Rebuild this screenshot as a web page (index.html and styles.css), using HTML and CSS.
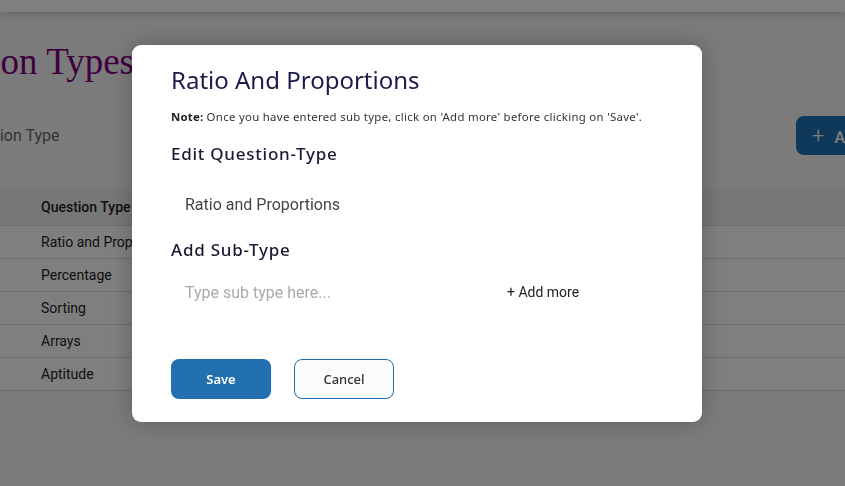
FILE: index.html
```html
<!DOCTYPE html>
<html>
<head>
<meta charset="utf-8">
<link rel="stylesheet" href="styles.css">
</head>
<body>
<div class="navbar"></div>
<main class="page">
  <h1 class="page-title">Question Types</h1>
  <div class="toolbar">
    <input class="search" type="text" placeholder="Search Question Type">
    <button class="add-btn"><span class="plus">+</span> Add Question Type</button>
  </div>
  <table class="grid">
    <thead>
      <tr><th class="c1">S.No</th><th class="c2">Question Type</th><th>Sub Types</th></tr>
    </thead>
    <tbody>
      <tr><td class="c1">1</td><td>Ratio and Proportions</td><td></td></tr>
      <tr><td class="c1">2</td><td>Percentage</td><td></td></tr>
      <tr><td class="c1">3</td><td>Sorting</td><td></td></tr>
      <tr><td class="c1">4</td><td>Arrays</td><td></td></tr>
      <tr><td class="c1">5</td><td>Aptitude</td><td></td></tr>
    </tbody>
  </table>
</main>

<div class="overlay">
  <div class="modal">
    <h2 class="modal-title">Ratio And Proportions</h2>
    <p class="note"><b>Note:</b> Once you have entered sub type, click on 'Add more' before clicking on 'Save'.</p>
    <h3 class="section">Edit Question-Type</h3>
    <input class="field" type="text" value="Ratio and Proportions">
    <h3 class="section sub">Add Sub-Type</h3>
    <div class="sub-row">
      <input class="field sub-field" type="text" placeholder="Type sub type here...">
      <button class="add-more">+ Add more</button>
    </div>
    <div class="actions">
      <button class="btn save">Save</button>
      <button class="btn cancel">Cancel</button>
    </div>
  </div>
</div>
</body>
</html>
```

FILE: styles.css
```css
* { box-sizing: border-box; }
html, body { margin: 0; padding: 0; }
body {
  width: 845px;
  height: 486px;
  overflow: hidden;
  background: #ffffff;
  font-family: Roboto, "Liberation Sans", sans-serif;
}
.navbar {
  height: 12px;
  background: #ffffff;
  box-shadow: 0 2px 8px rgba(0,0,0,0.18);
  position: relative;
  z-index: 1;
}
.page {
  margin-left: -112px;
  width: 1100px;
  background: #f6f6f6;
  padding-top: 30px;
  height: 474px;
}
.page-title {
  margin: 0 0 0 16px;
  font-family: "Liberation Serif", serif;
  font-weight: normal;
  font-size: 37px;
  line-height: 40px;
  color: #800080;
}
.toolbar {
  display: flex;
  align-items: center;
  margin-top: 25px;
  height: 56px;
}
.search {
  width: 400px;
  height: 48px;
  border: none;
  background: #f9f9f9;
  padding: 0 12px 0 17px;
  font-family: Roboto, sans-serif;
  font-size: 16px;
  color: #333;
  outline: none;
}
.search::placeholder { color: #666; }
.add-btn {
  margin-left: 508px;
  height: 39px;
  padding: 0 16px;
  border: none;
  border-radius: 8px;
  background: #1f72b6;
  color: #fff;
  font-family: Roboto, sans-serif;
  font-size: 16px;
  font-weight: 500;
  white-space: nowrap;
}
.plus { font-size: 22px; font-weight: 300; margin-right: 6px; }
.grid {
  margin-top: 26px;
  width: 1100px;
  border-collapse: collapse;
  font-family: Roboto, sans-serif;
  font-size: 14px;
  color: #222;
  background: #fff;
}
.grid th {
  text-align: left;
  font-weight: 500;
  height: 36px;
  background: #eeeeee;
  padding: 0;
}
.grid td {
  height: 33px;
  padding: 0;
  border-top: 1px solid #dddddd;
  border-bottom: 1px solid #dddddd;
}
.grid .c1 { width: 153px; padding-left: 16px; }
.grid .c2 { width: 300px; }

.overlay {
  position: fixed;
  inset: 0;
  background: rgba(0,0,0,0.5);
  padding: 45px 0 0 132px;
  z-index: 10;
}
.modal {
  width: 570px;
  height: 377px;
  background: #ffffff;
  border-radius: 9px;
  box-shadow: 0 0 24px rgba(0,0,0,0.25);
  padding: 19px 39px 0 39px;
  font-family: "Noto Sans", Inter, sans-serif;
}
.modal-title {
  margin: 0;
  font-family: "Noto Sans", sans-serif;
  font-weight: 400;
  font-size: 24px;
  line-height: 32px;
  color: #1c1b4a;
}
.note {
  margin: 13px 0 0 0;
  font-size: 11.4px;
  letter-spacing: 0.3px;
  line-height: 16px;
  color: #333;
  white-space: nowrap;
}
.note b { font-weight: 700; color: #222; letter-spacing: 0.2px; }
.section {
  margin: 17px 0 0 0;
  font-family: "Noto Sans", sans-serif;
  font-weight: 500;
  font-size: 17px;
  letter-spacing: 0.75px;
  line-height: 24px;
  color: #1a1a33;
}
.section.sub { margin-top: 14px; }
.field {
  display: block;
  width: 100%;
  height: 40px;
  margin-top: 18px;
  border: none;
  outline: none;
  background: #fff;
  padding: 0 14px;
  font-family: Roboto, sans-serif;
  font-size: 16px;
  color: #444;
}
.field::placeholder { color: #aaa; }
.sub-row {
  display: flex;
  align-items: center;
  margin-top: 10px;
}
.sub-field { width: 320px; margin-top: 0; }
.add-more {
  margin-left: 16px;
  border: none;
  background: transparent;
  font-family: Roboto, sans-serif;
  font-size: 14px;
  color: #222;
  padding: 0;
}
.actions {
  display: flex;
  gap: 23px;
  margin-top: 47px;
}
.btn {
  width: 100px;
  height: 40px;
  border-radius: 8px;
  font-family: "Noto Sans", sans-serif;
  font-size: 13px;
}
.save {
  background: #2270b0;
  border: none;
  color: #fff;
  font-weight: 600;
}
.cancel {
  background: #fbfbfb;
  border: 1px solid #2270b0;
  color: #333;
  font-weight: 500;
}
```
